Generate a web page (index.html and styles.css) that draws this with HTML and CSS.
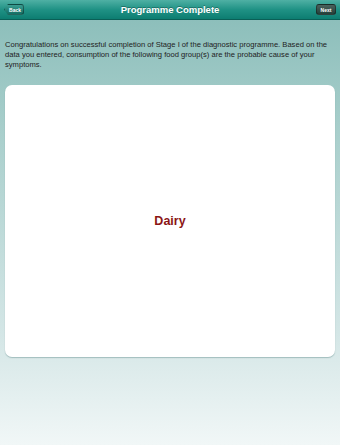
FILE: index.html
```html
<!DOCTYPE html>
<html lang="en">
<head>
  <meta charset="UTF-8">
  <meta name="viewport" content="width=device-width, initial-scale=1.0">
  <title>Programme Complete</title>
  <link rel="stylesheet" href="styles.css">
</head>
<body>
  <div class="navbar">
    <button class="nav-btn back-btn">Back</button>
    <h1 class="nav-title">Programme Complete</h1>
    <button class="nav-btn next-btn">Next</button>
  </div>

  <div class="content">
    <p class="intro">Congratulations on successful completion of Stage I of the diagnostic programme. Based on the data you entered, consumption of the following food group(s) are the probable cause of your symptoms.</p>

    <div class="result-card">
      <span class="result">Dairy</span>
    </div>
  </div>
</body>
</html>
```

FILE: styles.css
```css
html, body {
  height: 100%;
}
body {
  margin: 0;
  font-family: "Liberation Sans", Arial, sans-serif;
  background: linear-gradient(to bottom, #88bcb8 0%, #a9cfcc 30%, #d4e6e6 75%, #f1f7f7 100%);
  display: flex;
  flex-direction: column;
}
.navbar {
  height: 19px;
  display: flex;
  align-items: center;
  justify-content: space-between;
  padding: 0 4px;
  background: linear-gradient(to bottom, #4fb0a4 0%, #209285 50%, #0d7d71 100%);
  border-bottom: 1px solid #0a5f56;
}
.nav-title {
  margin: 0;
  color: #fff;
  font-size: 9.5px;
  font-weight: bold;
  text-shadow: 0 -1px 0 rgba(0, 0, 0, 0.3);
}
.nav-btn {
  font-family: inherit;
  font-size: 5px;
  font-weight: bold;
  color: #fff;
  border: 1px solid rgba(0, 0, 0, 0.35);
  height: 11px;
  width: 20px;
  padding: 0;
  border-radius: 3px;
  cursor: pointer;
}
.back-btn {
  background: linear-gradient(to bottom, #3a9d91, #146f65);
  clip-path: polygon(0 50%, 4px 0, 100% 0, 100% 100%, 4px 100%);
  border-radius: 0 3px 3px 0;
  padding-left: 2px;
}
.next-btn {
  background: linear-gradient(to bottom, #4b625d, #23403a);
}
.content {
  flex: 1;
  padding: 0 5px;
}
.intro {
  margin: 20px 0 0;
  font-size: 7.6px;
  line-height: 10px;
  color: #222;
}
.result-card {
  margin-top: 15px;
  height: 272px;
  background: #fff;
  border-radius: 7px;
  box-shadow: 0 1px 1px rgba(60, 110, 110, 0.35);
  display: flex;
  align-items: center;
  justify-content: center;
}
.result {
  color: #8b1515;
  font-size: 12.5px;
  font-weight: bold;
}
```
